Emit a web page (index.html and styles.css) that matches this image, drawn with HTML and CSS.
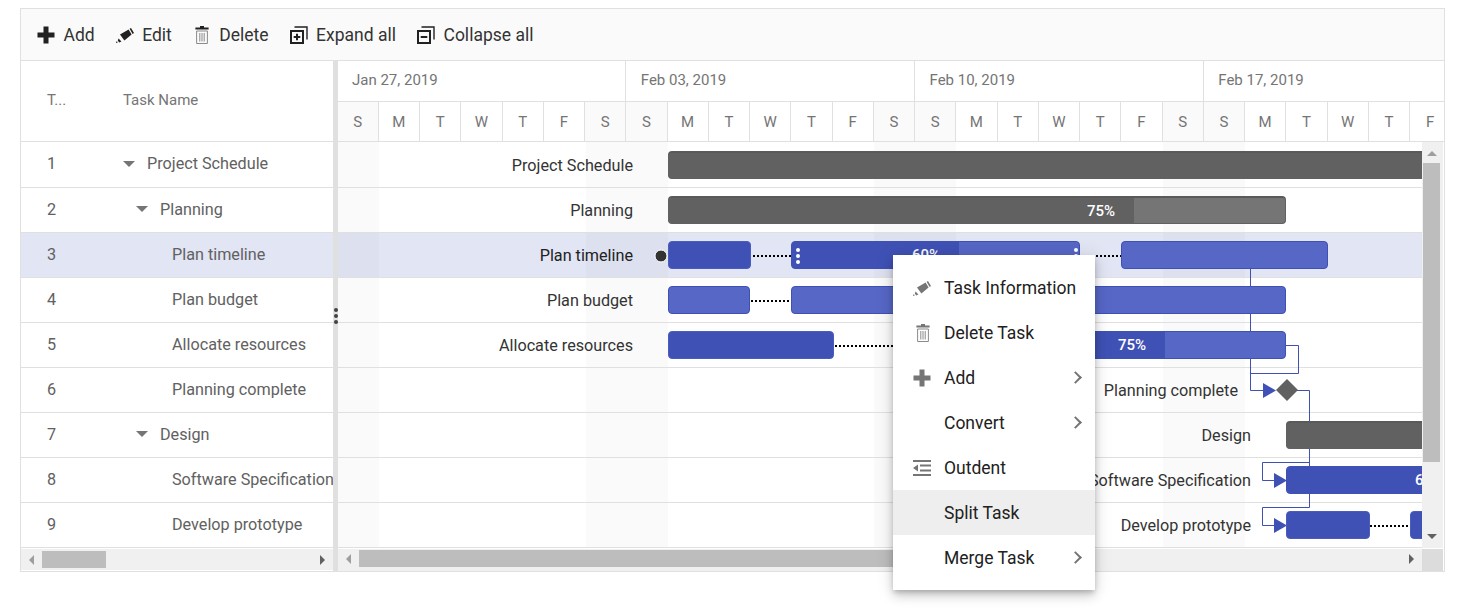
FILE: index.html
```html
<!DOCTYPE html>
<html lang="en">
<head>
<meta charset="UTF-8">
<title>Gantt chart</title>
<link rel="stylesheet" href="styles.css">
</head>
<body>
<svg class="icon-defs" width="0" height="0">
  <symbol id="i-plus" viewBox="0 0 18 18"><path d="M6.5 0.5h5v6h6v5h-6v6h-5v-6h-6v-5h6z"/></symbol>
  <symbol id="i-pencil" viewBox="0 0 18 18"><path d="M4 8.6 12.6 3.4 15.6 8.6 8.4 14.6zM13.6 2.8 15 2 18 7 16.6 8zM2.6 12.4 5.4 15.6 3.2 16.4 1.8 14.6zM.2 15.6l1.4.2-.4 1.2-1.2-.2z"/></symbol>
  <symbol id="i-trash" viewBox="0 0 14 18"><path d="M5 0h4v1.4h4.6v2.2H.4V1.4H5z"/><path class="trash-body" d="M1.6 5h10.8v12.5H1.6zM4.8 7v8.5M7 7v8.5M9.2 7v8.5"/></symbol>
  <symbol id="i-expand" viewBox="0 0 18 18"><path class="frame" d="M4.5 1h12.5v12.5" stroke-width="1.4"/><path class="frame" d="M1 5h12v12H1z" stroke-width="2"/><path d="M6 7.7h2v2.3h2.3v2H8v2.3H6V12H3.7v-2H6z"/></symbol>
  <symbol id="i-collapse" viewBox="0 0 18 18"><path class="frame" d="M4.5 1h12.5v12.5" stroke-width="1.4"/><path class="frame" d="M1 5h12v12H1z" stroke-width="2"/><path d="M3.7 10h6.6v2H3.7z"/></symbol>
  <symbol id="i-outdent" viewBox="0 0 18 16"><path d="M0 0h18v2H0zM7 4.6h11v2H7zM7 9.4h11v2H7zM0 14h18v2H0zM5 4.5v7L0 8z"/></symbol>
</svg>

<div class="gantt">
  <div class="toolbar">
    <div class="tool"><svg class="tool-icon plus"><use href="#i-plus"/></svg>Add</div>
    <div class="tool"><svg class="tool-icon"><use href="#i-pencil"/></svg>Edit</div>
    <div class="tool"><svg class="tool-icon trash"><use href="#i-trash"/></svg>Delete</div>
    <div class="tool"><svg class="tool-icon"><use href="#i-expand"/></svg>Expand all</div>
    <div class="tool"><svg class="tool-icon"><use href="#i-collapse"/></svg>Collapse all</div>
  </div>

  <div class="panes">
    <div class="grid-pane">
      <div class="grid-head">
        <div class="col-id">T...</div>
        <div class="col-name">Task Name</div>
      </div>
      <div class="grid-row first"><div class="col-id">1</div><div class="col-name level-1"><span class="caret"></span>Project Schedule</div></div>
      <div class="grid-row"><div class="col-id">2</div><div class="col-name level-2"><span class="caret"></span>Planning</div></div>
      <div class="grid-row selected"><div class="col-id">3</div><div class="col-name level-3">Plan timeline</div></div>
      <div class="grid-row"><div class="col-id">4</div><div class="col-name level-3">Plan budget</div></div>
      <div class="grid-row"><div class="col-id">5</div><div class="col-name level-3">Allocate resources</div></div>
      <div class="grid-row"><div class="col-id">6</div><div class="col-name level-3">Planning complete</div></div>
      <div class="grid-row"><div class="col-id">7</div><div class="col-name level-2"><span class="caret"></span>Design</div></div>
      <div class="grid-row"><div class="col-id">8</div><div class="col-name level-3">Software Specification</div></div>
      <div class="grid-row"><div class="col-id">9</div><div class="col-name level-3">Develop prototype</div></div>
      <div class="hscroll left-scroll">
        <span class="arrow-left"></span>
        <span class="hthumb left-thumb"></span>
        <span class="arrow-right"></span>
      </div>
    </div>

    <div class="splitter"><i></i><i></i><i></i></div>

    <div class="chart-pane">
      <div class="chart-head">
        <div class="weeks">
          <div class="week">Jan 27, 2019</div>
          <div class="week">Feb 03, 2019</div>
          <div class="week">Feb 10, 2019</div>
          <div class="week">Feb 17, 2019</div>
        </div>
        <div class="days">
          <div class="day off">S</div><div class="day">M</div><div class="day">T</div><div class="day">W</div><div class="day">T</div><div class="day">F</div><div class="day off">S</div>
          <div class="day off">S</div><div class="day">M</div><div class="day">T</div><div class="day">W</div><div class="day">T</div><div class="day">F</div><div class="day off">S</div>
          <div class="day off">S</div><div class="day">M</div><div class="day">T</div><div class="day">W</div><div class="day">T</div><div class="day">F</div><div class="day off">S</div>
          <div class="day off">S</div><div class="day">M</div><div class="day">T</div><div class="day">W</div><div class="day">T</div><div class="day">F</div>
        </div>
      </div>

      <div class="chart-body">
        <div class="canvas">
          <div class="weekend" style="left:0;width:41px"></div>
          <div class="weekend" style="left:248px;width:82px"></div>
          <div class="weekend" style="left:536px;width:82px"></div>
          <div class="weekend" style="left:825px;width:82px"></div>

          <div class="chart-row first"></div>
          <div class="chart-row"></div>
          <div class="chart-row selected"></div>
          <div class="chart-row"></div>
          <div class="chart-row"></div>
          <div class="chart-row"></div>
          <div class="chart-row"></div>
          <div class="chart-row"></div>
          <div class="chart-row"></div>

          <!-- viewBox uses page coordinates -->
          <svg class="links" viewBox="338 142 1084 406" width="1084" height="406">
            <g class="dots">
              <path d="M753 256H791M1080 256H1121M751 301H791M835 346H915M1370 526H1410"/>
            </g>
            <g class="link-lines">
              <path d="M1250.5 269V390.5H1264"/>
              <path d="M1286 345.5H1298.5V373.5H1250.5"/>
              <path d="M1297 390.5H1309.5V507.5H1262.5V525.5H1275"/>
              <path d="M1309.5 462.5H1262.5V480.5H1275"/>
            </g>
            <polygon class="link-head" points="1263,383 1276,390.5 1263,398"/>
            <polygon class="link-head" points="1274,473 1287,480.5 1274,488"/>
            <polygon class="link-head" points="1274,518 1287,525.5 1274,533"/>
            <polygon class="milestone" points="1276,390 1287,379 1298,390 1287,401"/>
            <circle class="handle" cx="661" cy="256" r="6"/>
          </svg>

          <div class="label" style="right:789px;top:12px">Project Schedule</div>
          <div class="label" style="right:789px;top:57px">Planning</div>
          <div class="label dark" style="right:789px;top:102px">Plan timeline</div>
          <div class="label" style="right:789px;top:147px">Plan budget</div>
          <div class="label" style="right:789px;top:192px">Allocate resources</div>
          <div class="label" style="right:184px;top:237px">Planning complete</div>
          <div class="label" style="right:171px;top:282px">Design</div>
          <div class="label" style="right:171px;top:327px">Software Specification</div>
          <div class="label" style="right:171px;top:372px">Develop prototype</div>

          <div class="bar parent" style="left:330px;top:9px;width:800px"></div>
          <div class="bar parent" style="left:330px;top:54px;width:618px"><div class="progress" style="width:465px">75%</div></div>

          <div class="bar full" style="left:330px;top:99px;width:83px"></div>
          <div class="bar" style="left:453px;top:99px;width:289px">
            <div class="progress" style="width:167px">60%</div>
            <span class="grip grip-left"><i></i><i></i><i></i></span>
            <span class="grip grip-right"><i></i><i></i><i></i></span>
          </div>
          <div class="bar" style="left:783px;top:99px;width:207px"></div>

          <div class="bar" style="left:330px;top:144px;width:82px"></div>
          <div class="bar" style="left:453px;top:144px;width:495px"></div>

          <div class="bar full" style="left:330px;top:189px;width:166px"></div>
          <div class="bar" style="left:577px;top:189px;width:371px"><div class="progress" style="width:249px">75%</div></div>

          <div class="bar parent" style="left:948px;top:279px;width:300px"></div>
          <div class="bar" style="left:948px;top:324px;width:300px"><div class="progress" style="width:175px">60%</div></div>
          <div class="bar full" style="left:948px;top:369px;width:84px"></div>
          <div class="bar full" style="left:1072px;top:369px;width:200px"></div>
        </div>

        <div class="vscroll">
          <span class="arrow-up"></span>
          <span class="vthumb"></span>
          <span class="arrow-down"></span>
        </div>
      </div>

      <div class="chart-foot">
        <div class="hscroll right-scroll">
          <span class="arrow-left"></span>
          <span class="hthumb right-thumb"></span>
          <span class="arrow-right"></span>
        </div>
        <div class="corner"></div>
      </div>
    </div>
  </div>
</div>

<ul class="menu">
  <li><svg class="menu-icon"><use href="#i-pencil"/></svg>Task Information</li>
  <li><svg class="menu-icon trash"><use href="#i-trash"/></svg>Delete Task</li>
  <li><svg class="menu-icon plus"><use href="#i-plus"/></svg>Add<span class="chevron"></span></li>
  <li>Convert<span class="chevron"></span></li>
  <li><svg class="menu-icon outdent"><use href="#i-outdent"/></svg>Outdent</li>
  <li class="hover">Split Task</li>
  <li>Merge Task<span class="chevron"></span></li>
</ul>
</body>
</html>
```

FILE: styles.css
```css
body {
  margin: 0;
  font-family: Roboto, sans-serif;
  background-color: #fff;
  overflow: hidden;
}

.icon-defs {
  position: absolute;
}

.gantt {
  width: 1425px;
  height: 564px;
  margin: 8px 0 0 20px;
  border: 1px solid #e0e0e0;
  box-sizing: border-box;
}

/* toolbar */
.toolbar {
  display: flex;
  align-items: center;
  gap: 21px;
  height: 52px;
  padding-left: 16px;
  box-sizing: border-box;
  background-color: #fafafa;
  border-bottom: 1px solid #e0e0e0;
  font-size: 17.5px;
  color: #333;
}

.tool {
  display: flex;
  align-items: center;
  gap: 8.5px;
}

.tool-icon {
  width: 18px;
  height: 18px;
  fill: #212121;
  color: #212121;
}

.frame {
  fill: none;
  stroke: currentColor;
}

.trash-body {
  fill: none;
  stroke: #8a8a8a;
  stroke-width: 1;
}

/* panes */
.panes {
  display: flex;
  height: 510px;
}

.grid-pane {
  width: 312px;
  font-size: 16.2px;
  color: #616161;
}

.grid-head {
  display: flex;
  align-items: center;
  height: 81px;
  box-sizing: border-box;
  padding-bottom: 2px;
  border-bottom: 1px solid #e0e0e0;
  font-size: 15px;
  color: #757575;
}

.grid-row {
  display: flex;
  align-items: center;
  height: 45px;
  box-sizing: border-box;
  padding-bottom: 2px;
  border-bottom: 1px solid #e0e0e0;
  white-space: nowrap;
}

.grid-row.first {
  height: 46px;
}

.grid-row.selected,
.chart-row.selected {
  background-color: rgba(63, 81, 181, 0.15);
}

.col-id {
  width: 102px;
  padding-left: 26px;
  box-sizing: border-box;
}

.col-name {
  flex: 1;
  display: flex;
  align-items: center;
  overflow: hidden;
}

.level-2 {
  padding-left: 13px;
}

.level-3 {
  padding-left: 49px;
}

.caret {
  width: 0;
  height: 0;
  margin-right: 12px;
  border-left: 6px solid transparent;
  border-right: 6px solid transparent;
  border-top: 6px solid #757575;
}

.splitter {
  width: 5px;
  background-color: #e0e0e0;
  display: flex;
  flex-direction: column;
  align-items: center;
  justify-content: center;
  gap: 2px;
}

.splitter i {
  flex: none;
  width: 4px;
  height: 4px;
  border-radius: 50%;
  background-color: #424242;
}

/* timeline */
.chart-pane {
  width: 1106px;
  overflow: hidden;
}

.chart-head {
  height: 81px;
  box-sizing: border-box;
  border-bottom: 1px solid #e0e0e0;
  color: #757575;
  overflow: hidden;
}

.weeks {
  display: flex;
  height: 41px;
  margin-left: -0.5px;
  box-sizing: border-box;
  border-bottom: 1px solid #e0e0e0;
}

.week {
  flex: 0 0 288.75px;
  box-sizing: border-box;
  padding: 10px 0 0 14.5px;
  border-right: 1px solid #e0e0e0;
  font-size: 15px;
}

.days {
  display: flex;
  height: 39px;
  margin-left: -0.5px;
}

.day {
  flex: 0 0 41.25px;
  box-sizing: border-box;
  display: flex;
  align-items: center;
  justify-content: center;
  border-right: 1px solid #e0e0e0;
  font-size: 15px;
}

.day.off {
  background-color: #fafafa;
}

.chart-body {
  display: flex;
  height: 406px;
}

.canvas {
  position: relative;
  width: 1084px;
  overflow: hidden;
}

.weekend {
  position: absolute;
  top: 0;
  bottom: 0;
  background-color: #fafafa;
}

.chart-row {
  position: relative;
  height: 45px;
  box-sizing: border-box;
  border-bottom: 1px solid #e0e0e0;
}

.chart-row.first {
  height: 46px;
}

.links {
  position: absolute;
  left: 0;
  top: 0;
}

.dots path {
  fill: none;
  stroke: #000;
  stroke-width: 2;
  stroke-dasharray: 2 2;
}

.link-lines path {
  fill: none;
  stroke: #3f51b5;
  stroke-width: 1;
}

.link-head {
  fill: #3f51b5;
}

.milestone {
  fill: #616161;
}

.handle {
  fill: #333;
  stroke: #fff;
  stroke-width: 1;
}

.label {
  position: absolute;
  font-size: 16.2px;
  line-height: 24px;
  color: #333;
  white-space: nowrap;
}

.label.dark {
  color: #212121;
}

.bar {
  position: absolute;
  height: 28px;
  box-sizing: border-box;
  background-color: #5767c6;
  border: 1px solid #3f51b5;
  border-radius: 4px;
  overflow: hidden;
}

.bar.full {
  background-color: #3f51b5;
  border-color: #4a5cbd;
}

.bar.parent {
  background-color: #757575;
  border-color: #616161;
  border-top: 2px solid #5a5a5a;
}

.bar.parent:not(:has(.progress)) {
  background-color: #616161;
}

.progress {
  height: 100%;
  box-sizing: border-box;
  padding-right: 19px;
  text-align: right;
  background-color: #3f51b5;
  color: #fff;
  font-size: 15px;
  font-weight: 500;
  line-height: 26px;
}

.parent .progress {
  background-color: #616161;
}

.grip {
  position: absolute;
  top: 6px;
  display: flex;
  flex-direction: column;
  gap: 2px;
}

.grip i {
  width: 4px;
  height: 4px;
  border-radius: 50%;
  background-color: #fff;
}

.grip-left {
  left: 4px;
}

.grip-right {
  right: 1px;
}

/* scrollbars */
.vscroll {
  width: 21px;
  box-sizing: border-box;
  background-color: #f0f0f0;
  display: flex;
  flex-direction: column;
  align-items: center;
  padding: 9px 2px 9px 0;
}

.vthumb {
  width: 17px;
  height: 299px;
  margin-top: 7px;
  background-color: #bdbdbd;
}

.arrow-up {
  width: 0;
  height: 0;
  border-left: 5px solid transparent;
  border-right: 5px solid transparent;
  border-bottom: 5px solid #9e9e9e;
}

.arrow-down {
  width: 0;
  height: 0;
  margin-top: auto;
  border-left: 5px solid transparent;
  border-right: 5px solid transparent;
  border-top: 5px solid #616161;
}

.chart-foot {
  display: flex;
  height: 22px;
  margin-top: 1px;
}

.hscroll {
  display: flex;
  align-items: center;
  background-color: #f0f0f0;
}

.left-scroll {
  height: 21px;
  margin-top: 1px;
  padding: 0 8px;
}

.right-scroll {
  width: 1084px;
  box-sizing: border-box;
  padding: 0 8px 3px;
}

.hthumb {
  height: 17px;
  background-color: #bdbdbd;
}

.left-thumb {
  width: 64px;
  margin-left: 8px;
}

.right-thumb {
  width: 540px;
  margin-left: 8px;
}

.arrow-left {
  width: 0;
  height: 0;
  border-top: 5px solid transparent;
  border-bottom: 5px solid transparent;
  border-right: 5px solid #9e9e9e;
}

.arrow-right {
  width: 0;
  height: 0;
  margin-left: auto;
  border-top: 5px solid transparent;
  border-bottom: 5px solid transparent;
  border-left: 5px solid #616161;
}

.corner {
  width: 21px;
  background-color: #dcdcdc;
}

/* context menu */
.menu {
  position: absolute;
  left: 893px;
  top: 255px;
  width: 202px;
  margin: 0;
  padding: 10px 0;
  list-style: none;
  background-color: #fff;
  box-shadow: 0 3px 5px -1px rgba(0, 0, 0, 0.2), 0 6px 10px rgba(0, 0, 0, 0.14), 0 1px 18px rgba(0, 0, 0, 0.12);
  font-size: 17.5px;
  color: #212121;
}

.menu li {
  position: relative;
  display: flex;
  align-items: center;
  height: 45px;
  padding-left: 51px;
}

.menu li.hover {
  background-color: #eee;
}

.menu-icon {
  position: absolute;
  left: 20px;
  top: 14px;
  width: 18px;
  height: 18px;
  fill: #757575;
}

.menu-icon.trash {
  left: 23px;
  width: 14px;
}

.chevron {
  position: absolute;
  right: 15px;
  top: 18px;
  width: 7px;
  height: 7px;
  border-top: 2px solid #757575;
  border-right: 2px solid #757575;
  transform: rotate(45deg);
}
```
